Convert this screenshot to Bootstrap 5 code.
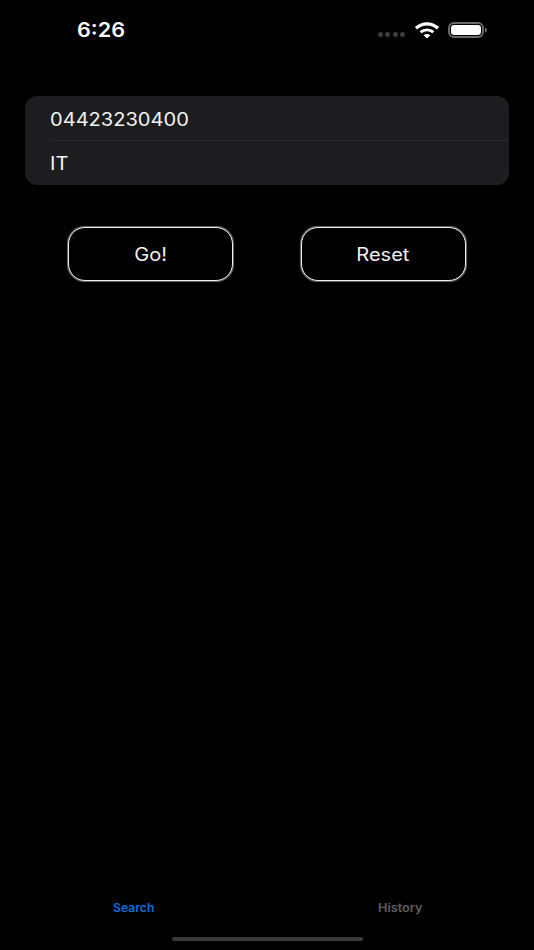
<!DOCTYPE html>
<html lang="en">
<head>
<meta charset="utf-8">
<title>Search</title>
<link href="https://cdn.jsdelivr.net/npm/bootstrap@5.3.0/dist/css/bootstrap.min.css" rel="stylesheet">
<style>
html,body{height:100%;background:#000;}
body{font-family:"Inter","Liberation Sans",sans-serif;color:#f2f2f2;}
.screen{width:534px;height:950px;background:#000;overflow:hidden;}
.wide{display:inline-block;transform:scaleX(1.115);}
.statusbar{height:60px;padding:0 46px 0 77px;}
.clock{font-size:20px;font-weight:600;line-height:24px;color:#fff;transform:scaleX(1.08);transform-origin:left center;margin-top:-1px;}
.dots{gap:2.5px;margin-top:9px;margin-right:9px;}
.dots i{display:block;width:5px;height:5px;border-radius:50%;background:#3c3c3c;}
.formbox{margin:36px 25px 0;height:89px;background:#1d1d1f;border-radius:12px;overflow:hidden;}
.formrow{height:44px;margin-left:25px;font-size:18px;padding-top:2px;color:#f2f2f2;}
.formrow .wide{transform-origin:left center;}
.formrow+.formrow{height:45px;border-top:1px solid #2c2c2e;padding-top:1px;}
.actions{margin-top:42px;padding:0 68.500px 0 68px;}
.btn.pill{width:165px;height:54px;background:#000;border:1px solid #f0f0f0;box-shadow:0 0 1px .5px rgba(255,255,255,.4);border-radius:17px;color:#f0f0f0;font-size:18px;padding:1px 0 0;}
.tabs{height:46px;font-size:11.5px;font-weight:600;padding-top:2px;}
.tab-on{color:#0a6fdc;margin-left:113px;transform:scaleX(1.06);transform-origin:left center;}
.tab-off{color:#5f5f5f;margin-left:226px;transform:scaleX(1.1);transform-origin:left center;}
.homebar{width:191px;height:4px;background:#3a3a3a;border-radius:2px;margin:6px auto 0;}
.spacer{height:604px;}
</style>
</head>
<body>
<div class="screen d-flex flex-column">
  <div class="statusbar d-flex justify-content-between align-items-center">
    <span class="clock wide">6:26</span>
    <div class="d-flex align-items-center">
      <div class="dots d-flex"><i></i><i></i><i></i><i></i></div>
      <svg width="26" height="18" viewBox="0 0 26 18" class="me-2" aria-hidden="true"><path d="M2 7.200C8.500 1.400 17.500 1.400 24 7.200" fill="none" stroke="#fff" stroke-width="3.200"/><path d="M6.600 11.200c3.800-3.100 9-3.100 12.800 0" fill="none" stroke="#fff" stroke-width="3"/><path d="M9.600 14.200c2.200-1.600 4.600-1.600 6.800 0L13 17.600z" fill="#fff"/></svg>
      <svg width="40" height="16" viewBox="0 0 40 16" aria-hidden="true"><rect x="1" y="1" width="34" height="14" rx="5" fill="none" stroke="#6a6a6a" stroke-width="2"/><rect x="3" y="3" width="30" height="10" rx="3.200" fill="#fff"/><path d="M37 5.500c1.500.4 2 1.300 2 2.500s-.5 2.100-2 2.500z" fill="#6a6a6a"/></svg>
    </div>
  </div>
  <div class="formbox">
    <div class="formrow d-flex align-items-center"><span class="wide">04423230400</span></div>
    <div class="formrow d-flex align-items-center"><span class="wide">IT</span></div>
  </div>
  <div class="actions d-flex justify-content-between">
    <button type="button" class="btn pill"><span class="wide">Go!</span></button>
    <button type="button" class="btn pill"><span class="wide">Reset</span></button>
  </div>
  <div class="spacer"></div>
  <div class="tabs d-flex align-items-center">
    <span class="wide tab-on">Search</span>
    <span class="wide tab-off">History</span>
  </div>
  <div class="homebar"></div>
</div>
<script src="https://cdn.jsdelivr.net/npm/bootstrap@5.3.0/dist/js/bootstrap.bundle.min.js"></script>
</body>
</html>
